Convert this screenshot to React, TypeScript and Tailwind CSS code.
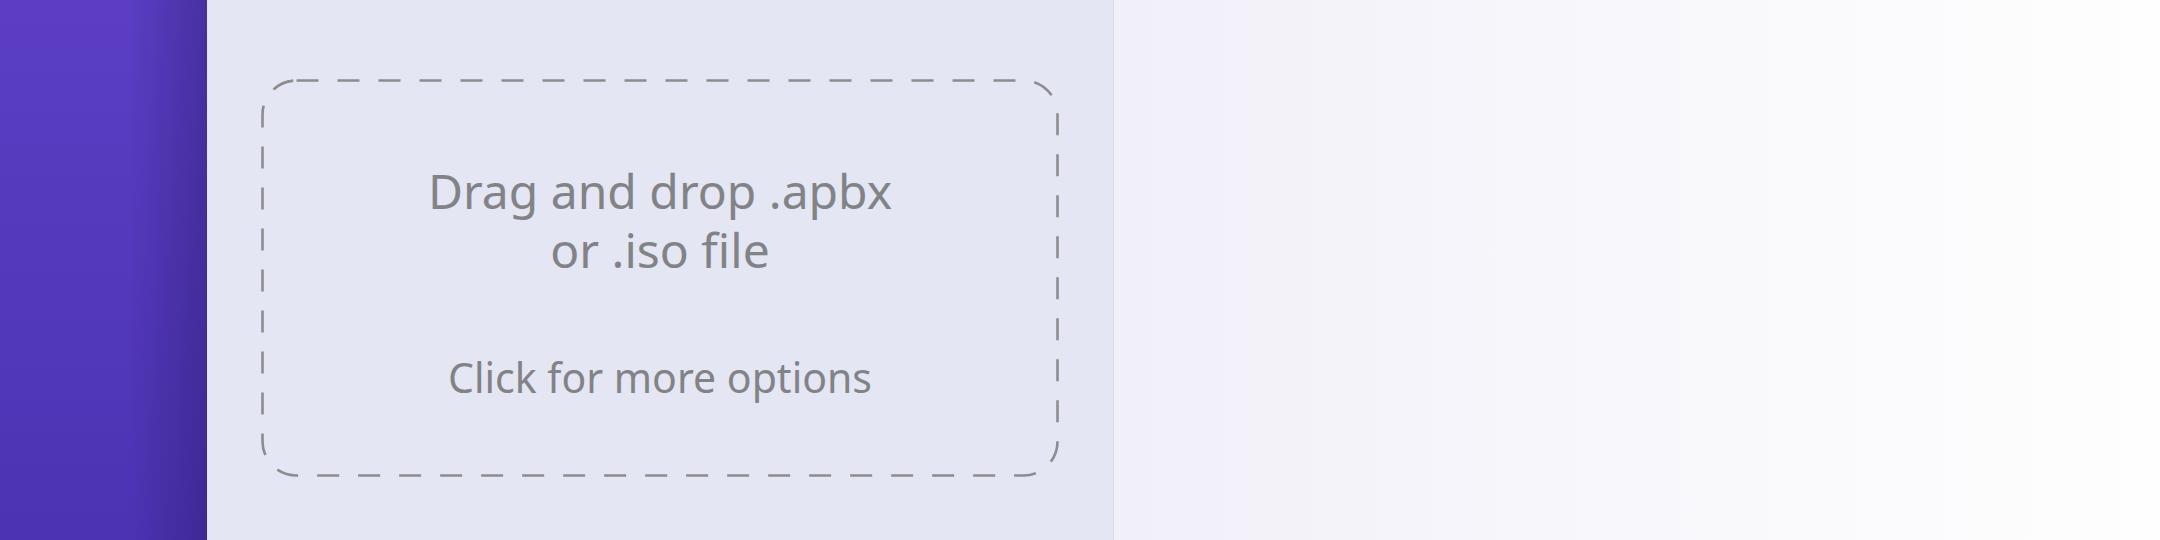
export default function App() {
  return (
    <div className="flex h-[540px] w-full overflow-hidden font-['Noto_Sans',sans-serif]">
      {/* sidebar */}
      <aside className="w-[207px] shrink-0 bg-[linear-gradient(to_right,rgba(30,15,80,0)_62%,rgba(30,15,80,0.3)_100%),linear-gradient(to_bottom,#5b3ec4,#4c33b3)]" />

      {/* drop panel */}
      <section className="w-[907px] shrink-0 border-r border-[#d5d6e3] bg-[#e4e6f3] pl-[54px] pr-[54px] pt-[79px]">
        <div className="relative flex h-[398px] flex-col items-center justify-center pt-[6px] text-center text-[#828386]">
          <svg className="pointer-events-none absolute inset-0" width="798" height="398" viewBox="0 0 798 398">
            <rect
              x="1.5"
              y="1.5"
              width="795"
              height="395"
              rx="34"
              fill="none"
              stroke="#8d8d8f"
              strokeWidth="2.6"
              strokeDasharray="22 19"
            />
          </svg>
          <p className="text-[48px] leading-[59px]">
            Drag and drop .apbx
            <br />
            or .iso file
          </p>
          <p className="mt-[73px] text-[41px] leading-[50px]">Click for more options</p>
        </div>
      </section>

      {/* empty content */}
      <main className="flex-1 bg-gradient-to-r from-[#f1eff8] via-[#f8f8fc] to-[#fefefe]" />
    </div>
  );
}
